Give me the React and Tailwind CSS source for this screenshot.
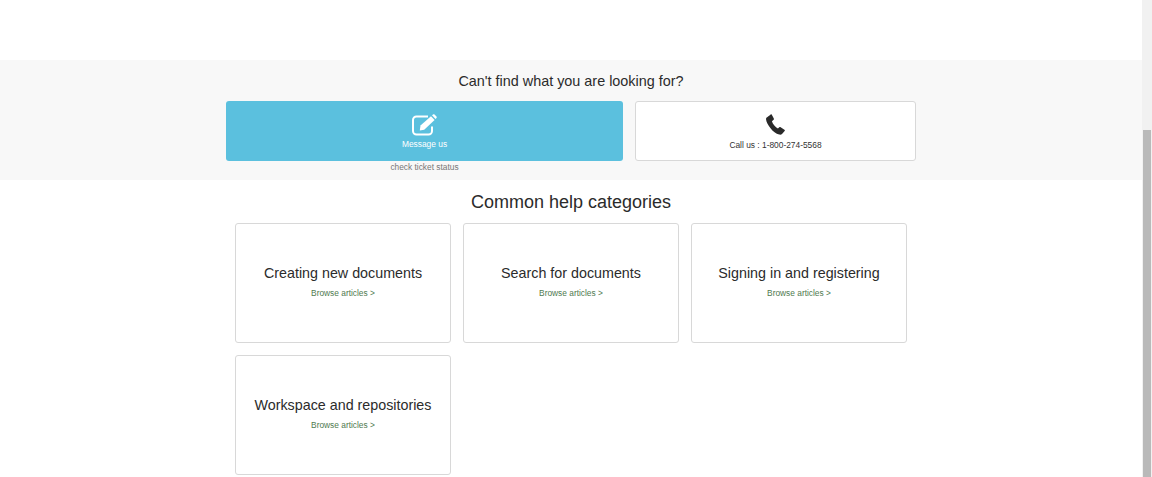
import React from "react";

function Card({ title }) {
  return (
    <div className="flex h-[120px] w-[216px] flex-col items-center rounded-[3px] border border-[#d8d8d8] bg-white pt-[40px]">
      <div className="text-[14.3px] leading-[18px] text-[#2b2b2b]">{title}</div>
      <div className="mt-[6px] text-[8.35px] leading-[11px] text-[#4f7a4f]">Browse articles &gt;</div>
    </div>
  );
}

export default function App() {
  return (
    <div className="relative h-[477px] w-[1152px] overflow-hidden bg-white font-['Liberation_Sans',Arial,sans-serif]">
      <div className="w-[1142px] pt-[60px]">
        <section className="flex h-[120px] flex-col items-center bg-[#f8f8f8]">
          <h2 className="mt-[12px] text-[14.4px] leading-[18px] text-[#2b2b2b]">Can't find what you are looking for?</h2>
          <div className="mt-[11px] flex gap-[12px]">
            <div className="flex w-[397px] flex-col items-center">
              <div className="flex h-[60px] w-full flex-col items-center rounded-[3px] bg-[#5bc0de] pt-[13px] text-white">
                <svg viewBox="0 0 27 22" className="h-[22px] w-[27px]" fill="none">
                  <path d="M17 2.500H5.500a3.500 3.500 0 0 0-3.500 3.500v11a3.500 3.500 0 0 0 3.500 3.500h12a3.500 3.500 0 0 0 3.500-3.500v-4.500" stroke="#fff" strokeWidth="2" />
                  <path d="M9.500 11.500 20 2.200l3.600 3.800L13.200 15.800l-4.400.8Z" fill="#fff" />
                  <path d="M21 1.300l1-.8c.5-.4 1.100-.4 1.500 0l2 2c.4.400.4 1 0 1.500l-1 1Z" fill="#fff" />
                </svg>
                <span className="mt-[2px] text-[8.4px] leading-[12px]">Message us</span>
              </div>
              <span className="mt-[1px] text-[8.35px] leading-[11px] text-[#777]">check ticket status</span>
            </div>
            <div className="flex h-[60px] w-[281px] flex-col items-center rounded-[3px] border border-[#d8d8d8] bg-white pt-[12px]">
              <svg viewBox="0 0 20 20" className="h-[21px] w-[21px]" fill="#2a2a2a">
                <path d="M2 3.200 5.200.6c.5-.4 1-.3 1.300.2l1.900 3.400c.3.500.2.900-.2 1.300L6.600 6.800c.3 1.200 1 2.500 2.100 3.900 1.200 1.500 2.400 2.500 3.600 3.100l1.300-1.100c.4-.4.900-.4 1.300-.1l3.600 2.400c.5.300.6.900.2 1.300l-2.500 2.800c-.6.600-1.600.8-2.700.5-3-.8-5.900-3-8.400-6.300C2.500 10 1.200 7.200 1 4.900.9 4.200 1.400 3.600 2 3.200Z" />
              </svg>
              <span className="mt-[4px] text-[8.4px] leading-[12px] text-[#333]">Call us : 1-800-274-5568</span>
            </div>
          </div>
        </section>
        <h2 className="mt-[11px] text-center text-[18px] leading-[22px] text-[#2b2b2b]">Common help categories</h2>
        <div className="mx-auto mt-[10px] grid w-[672px] grid-cols-[216px_216px_216px] gap-[12px]">
          <Card title="Creating new documents" />
          <Card title="Search for documents" />
          <Card title="Signing in and registering" />
          <Card title="Workspace and repositories" />
        </div>
      </div>
      <div className="absolute right-0 top-0 h-full w-[10px] bg-[#f1f1f1]">
        <div className="ml-[1px] mt-[130px] h-[347px] w-[8px] bg-[#b9b9b9]" />
      </div>
    </div>
  );
}
